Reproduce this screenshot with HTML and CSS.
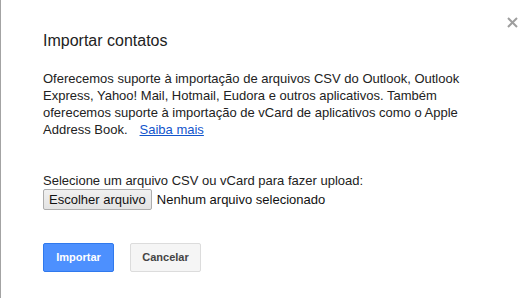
FILE: index.html
```html
<!DOCTYPE html>
<html lang="pt-BR">
<head>
<meta charset="utf-8">
<title>Importar contatos</title>
<link rel="stylesheet" href="styles.css">
</head>
<body>
<div class="dialog">
  <span class="close" aria-label="Fechar">
    <svg width="11" height="11" viewBox="0 0 11 11"><path d="M1 1 L10 10 M10 1 L1 10" stroke="#9e9e9e" stroke-width="2" fill="none"/></svg>
  </span>
  <h1 class="title">Importar contatos</h1>
  <p class="desc">Oferecemos suporte à importação de arquivos CSV do Outlook, Outlook Express, Yahoo! Mail, Hotmail, Eudora e outros aplicativos. Também oferecemos suporte à importação de vCard de aplicativos como o Apple Address Book.<a class="link" href="#">Saiba mais</a></p>
  <div class="upload">
    <div class="upload-label">Selecione um arquivo CSV ou vCard para fazer upload:</div>
    <div class="file-row">
      <span class="file-btn">Escolher arquivo</span>
      <span class="file-status">Nenhum arquivo selecionado</span>
    </div>
  </div>
  <div class="actions">
    <button class="btn btn-primary">Importar</button>
    <button class="btn">Cancelar</button>
  </div>
</div>
</body>
</html>
```
FILE: styles.css
```css
html, body {
  margin: 0;
  padding: 0;
  background: #fff;
}
body {
  font-family: "Liberation Sans", Arial, sans-serif;
  color: #222;
}
.dialog {
  position: relative;
  box-sizing: border-box;
  height: 298px;
  border-left: 1px solid #a3a3a3;
  padding: 32px 42px 0 42px;
}
.close {
  position: absolute;
  top: 17px;
  right: 11px;
  width: 11px;
  height: 11px;
  display: block;
}
.close svg { display: block; }
.title {
  margin: 0;
  font-size: 16px;
  font-weight: normal;
  line-height: 18px;
  color: #222;
}
.desc {
  margin: 20px 0 0 0;
  font-size: 13px;
  line-height: 17px;
}
.link {
  color: #15c;
  text-decoration: underline;
  margin-left: 12px;
}
.upload {
  margin-top: 34px;
  font-size: 13px;
  line-height: 17px;
}
.file-row {
  display: flex;
  align-items: center;
  gap: 5px;
}
.file-btn {
  box-sizing: border-box;
  height: 21px;
  line-height: 19px;
  padding: 0 5px;
  border: 1px solid #adadad;
  border-radius: 2px;
  background: linear-gradient(#f0f0f0, #e3e3e3);
  color: #111;
}
.file-status {
  color: #111;
}
.actions {
  margin-top: 33px;
  display: flex;
  gap: 16px;
}
.btn {
  box-sizing: border-box;
  min-width: 71px;
  height: 29px;
  line-height: 27px;
  padding: 0 8px;
  font-family: "Liberation Sans", Arial, sans-serif;
  font-size: 11px;
  font-weight: bold;
  color: #444;
  background: #f5f5f5;
  border: 1px solid #dcdcdc;
  border-radius: 2px;
}
.btn-primary {
  color: #fff;
  background: #4d90fe;
  border-color: #3079ed;
}
```
